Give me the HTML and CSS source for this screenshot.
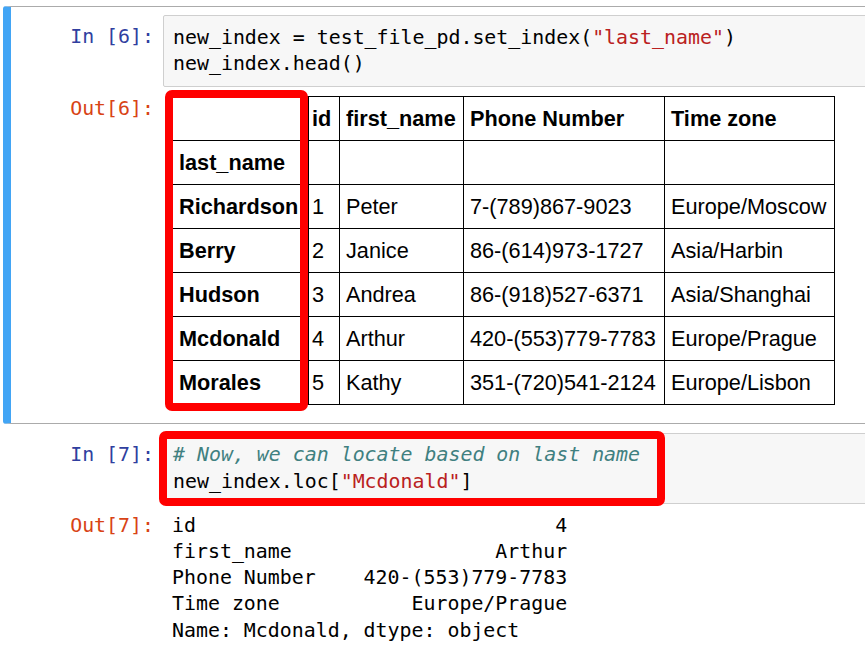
FILE: index.html
```html
<!DOCTYPE html>
<html>
<head>
<meta charset="utf-8">
<link rel="stylesheet" href="styles.css">
</head>
<body>
<div class="notebook">
  <div class="cell selected">
    <div class="row input">
      <div class="prompt in">In&nbsp;[6]:</div>
      <div class="code"><pre>new_index = test_file_pd.set_index(<span class="s">"last_name"</span>)
new_index.head()</pre></div>
    </div>
    <div class="row output first-out">
      <div class="prompt out">Out[6]:</div>
      <div class="out-content">
        <div class="table-wrap">
          <table class="df">
            <colgroup>
              <col class="c1"><col class="c2"><col class="c3"><col class="c4"><col class="c5">
            </colgroup>
            <thead>
              <tr><th></th><th>id</th><th>first_name</th><th>Phone Number</th><th>Time zone</th></tr>
              <tr><th>last_name</th><th></th><th></th><th></th><th></th></tr>
            </thead>
            <tbody>
              <tr><th>Richardson</th><td>1</td><td>Peter</td><td>7-(789)867-9023</td><td>Europe/Moscow</td></tr>
              <tr><th>Berry</th><td>2</td><td>Janice</td><td>86-(614)973-1727</td><td>Asia/Harbin</td></tr>
              <tr><th>Hudson</th><td>3</td><td>Andrea</td><td>86-(918)527-6371</td><td>Asia/Shanghai</td></tr>
              <tr><th>Mcdonald</th><td>4</td><td>Arthur</td><td>420-(553)779-7783</td><td>Europe/Prague</td></tr>
              <tr><th>Morales</th><td>5</td><td>Kathy</td><td>351-(720)541-2124</td><td>Europe/Lisbon</td></tr>
            </tbody>
          </table>
          <div class="mark mark-index"></div>
        </div>
      </div>
    </div>
  </div>
  <div class="cell">
    <div class="row input">
      <div class="prompt in">In&nbsp;[7]:</div>
      <div class="code code-marked"><pre><span class="c"># Now, we can locate based on last name</span>
new_index.loc[<span class="s">"Mcdonald"</span>]</pre>
        <div class="mark mark-code"></div>
      </div>
    </div>
    <div class="row output">
      <div class="prompt out">Out[7]:</div>
      <div class="out-content"><pre class="series">id                              4
first_name                 Arthur
Phone Number    420-(553)779-7783
Time zone           Europe/Prague
Name: Mcdonald, dtype: object</pre></div>
    </div>
  </div>
</div>
</body>
</html>
```

FILE: styles.css
```css
html, body {
  margin: 0;
  padding: 0;
  background: #fff;
  overflow: hidden;
}

.notebook {
  width: 900px;
  padding-left: 3px;
  padding-top: 6px;
}

.cell {
  border: 1px solid transparent;
  border-left: 8px solid transparent;
  border-radius: 3px;
  padding: 8px 0 0 0;
}

.cell.selected {
  border-color: #ababab;
  border-left-color: #42a5f5;
  padding-bottom: 14px;
}

.row {
  display: flex;
  align-items: flex-start;
}

.prompt {
  width: 143px;
  flex: none;
  padding-right: 9px;
  text-align: right;
  font-family: "DejaVu Sans Mono", monospace;
  font-size: 19.9px;
  line-height: 26.2px;
  white-space: nowrap;
}

.prompt.in {
  color: #303f9f;
  padding-top: 9px;
}

.prompt.out {
  color: #d84315;
}

.code {
  flex: 1;
  position: relative;
  background: #f7f7f7;
  border: 1px solid #cfcfcf;
  border-radius: 2px;
  padding: 9px 9px 9px 9px;
}

.code-marked {
  padding: 8px 9px 8px 9px;
}

pre {
  margin: 0;
  font-family: "DejaVu Sans Mono", monospace;
  font-size: 19.9px;
  line-height: 26.2px;
  color: #000;
}

.s { color: #ba2121; }
.c { color: #408080; font-style: italic; }

.output {
  margin-top: 9px;
}

.out-content {
  padding-left: 9px;
}

.table-wrap {
  position: relative;
  display: inline-block;
}

.df {
  border-collapse: collapse;
  table-layout: fixed;
  width: 663px;
  font-family: "Liberation Sans", Arial, sans-serif;
  font-size: 21.7px;
  color: #000;
}

.df col.c1 { width: 136px; }
.df col.c2 { width: 31px; }
.df col.c3 { width: 124px; }
.df col.c4 { width: 201px; }
.df col.c5 { width: 170px; }

.df th, .df td {
  border: 1px solid #000;
  height: 25px;
  line-height: 25px;
  padding: 9px 0 9px 6px;
  text-align: left;
  white-space: nowrap;
  overflow: hidden;
}

.df tr > :nth-child(2) {
  padding-left: 3px;
}

.df th { font-weight: bold; }
.df td { font-weight: normal; }

.mark {
  position: absolute;
  border: 8px solid #ff0000;
  border-radius: 7px;
  box-sizing: border-box;
  pointer-events: none;
}

.mark-index {
  left: -7px;
  top: -6px;
  width: 143px;
  height: 321px;
}

.mark-code {
  left: -5px;
  top: -3px;
  width: 506px;
  height: 75px;
}

.series {
  padding-top: 0;
}
```
